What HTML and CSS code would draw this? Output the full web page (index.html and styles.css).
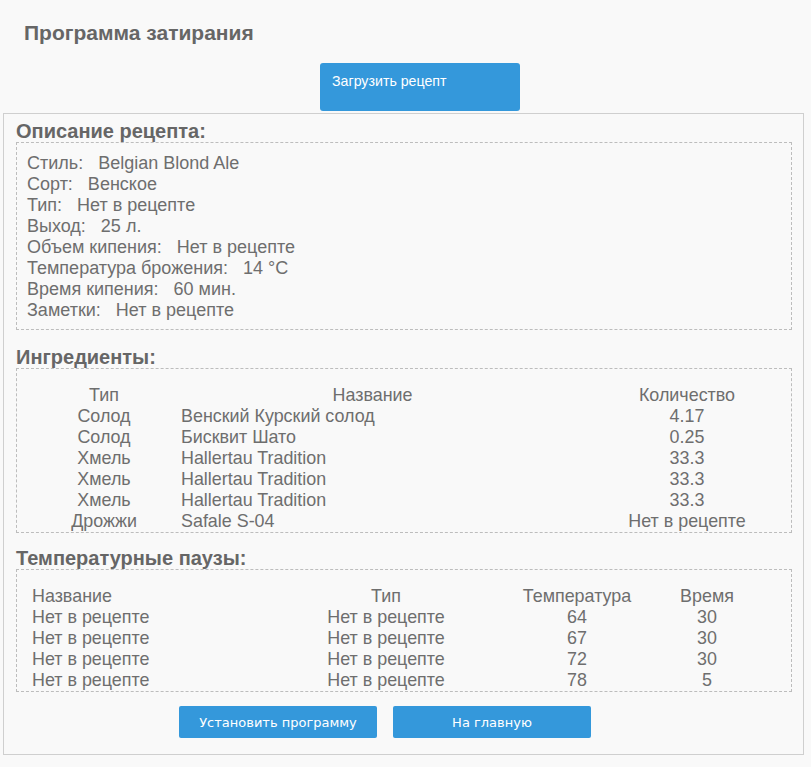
FILE: index.html
```html
<!DOCTYPE html>
<html lang="ru">
<head>
<meta charset="UTF-8">
<title>Программа затирания</title>
<link rel="stylesheet" href="styles.css">
</head>
<body>
<div class="page">
  <h1 class="title">Программа затирания</h1>

  <div class="load-row">
    <button class="btn-load">Загрузить рецепт</button>
  </div>

  <div class="panel">
    <h2 class="sec-title">Описание рецепта:</h2>
    <div class="box desc">
      <div>Стиль:&nbsp;&nbsp; Belgian Blond Ale</div>
      <div>Сорт:&nbsp;&nbsp; Венское</div>
      <div>Тип:&nbsp;&nbsp; Нет в рецепте</div>
      <div>Выход:&nbsp;&nbsp; 25 л.</div>
      <div>Объем кипения:&nbsp;&nbsp; Нет в рецепте</div>
      <div>Температура брожения:&nbsp;&nbsp; 14 °C</div>
      <div>Время кипения:&nbsp;&nbsp; 60 мин.</div>
      <div>Заметки:&nbsp;&nbsp; Нет в рецепте</div>
    </div>

    <h2 class="sec-title">Ингредиенты:</h2>
    <div class="box box-table ingr">
      <table class="grid">
        <colgroup>
          <col class="c-type">
          <col class="c-name">
          <col class="c-qty">
        </colgroup>
        <tr class="head"><td class="center">Тип</td><td class="name-head">Название</td><td class="center">Количество</td></tr>
        <tr><td class="center">Солод</td><td>Венский Курский солод</td><td class="center">4.17</td></tr>
        <tr><td class="center">Солод</td><td>Бисквит Шато</td><td class="center">0.25</td></tr>
        <tr><td class="center">Хмель</td><td>Hallertau Tradition</td><td class="center">33.3</td></tr>
        <tr><td class="center">Хмель</td><td>Hallertau Tradition</td><td class="center">33.3</td></tr>
        <tr><td class="center">Хмель</td><td>Hallertau Tradition</td><td class="center">33.3</td></tr>
        <tr><td class="center">Дрожжи</td><td>Safale S-04</td><td class="center">Нет в рецепте</td></tr>
      </table>
    </div>

    <h2 class="sec-title tight">Температурные паузы:</h2>
    <div class="box box-table pauses">
      <table class="grid">
        <colgroup>
          <col class="c-pname">
          <col class="c-ptype">
          <col class="c-temp">
          <col class="c-time">
        </colgroup>
        <tr><td>Название</td><td class="center">Тип</td><td class="center">Температура</td><td class="center">Время</td></tr>
        <tr><td>Нет в рецепте</td><td class="center">Нет в рецепте</td><td class="center">64</td><td class="center">30</td></tr>
        <tr><td>Нет в рецепте</td><td class="center">Нет в рецепте</td><td class="center">67</td><td class="center">30</td></tr>
        <tr><td>Нет в рецепте</td><td class="center">Нет в рецепте</td><td class="center">72</td><td class="center">30</td></tr>
        <tr><td>Нет в рецепте</td><td class="center">Нет в рецепте</td><td class="center">78</td><td class="center">5</td></tr>
      </table>
    </div>

    <div class="actions">
      <button class="btn">Установить программу</button>
      <button class="btn">На главную</button>
    </div>
  </div>
</div>
</body>
</html>
```

FILE: styles.css
```css
:root {
  --bg: #f9f9f9;
  --ink: #6e6e6e;
  --ink-head: #666;
  --line: #cfcfcf;
  --dash: #bdbdbd;
  --blue: #3498db;
}
* { box-sizing: border-box; }
html, body {
  margin: 0;
  padding: 0;
  background: var(--bg);
  color: var(--ink);
  font-family: "Liberation Sans", Arial, sans-serif;
}
.page {
  width: 811px;
}
.title {
  margin: 0;
  padding: 21px 0 0 24px;
  font-size: 21px;
  line-height: 23px;
  font-weight: bold;
  color: var(--ink-head);
}
.load-row {
  display: flex;
  padding-left: 320px;
  margin-top: 19px;
}
.btn-load {
  width: 200px;
  height: 48px;
  border: none;
  border-radius: 3px;
  background: var(--blue);
  color: #fff;
  font-family: "Liberation Sans", Arial, sans-serif;
  font-size: 14.2px;
  text-align: left;
  padding: 10px 12px 0;
  display: flex;
  align-items: flex-start;
}
.panel {
  margin: 2px 0 0 3px;
  width: 801px;
  border: 1px solid var(--line);
  padding: 6px 11px 16px 12px;
}
.sec-title {
  margin: 16px 0 0 0;
  font-size: 20px;
  line-height: 22px;
  font-weight: bold;
  color: var(--ink-head);
}
.sec-title:first-child { margin-top: 0; }
.sec-title.tight { margin-top: 14px; }
.box {
  border: 1px dashed var(--dash);
  width: 776px;
}
.desc {
  padding: 10px 10px 8px 10px;
  font-size: 18px;
  line-height: 21px;
}
.box-table { padding: 16px 0 0 11px; }
.grid {
  border-collapse: collapse;
  table-layout: fixed;
  font-size: 17.9px;
}
.grid td {
  padding: 0;
  height: 21px;
  line-height: 21px;
  white-space: nowrap;
}
.grid .center { text-align: center; }
.c-type { width: 152px; }
.c-name { width: 404px; }
.c-qty { width: 206px; }
.grid td.name-head {
  text-align: center;
  padding-right: 20px;
}
.ingr .grid td:nth-child(2) { padding-left: 1px; }
.pauses .grid td:first-child { padding-left: 4px; }
.c-pname { width: 240px; }
.c-ptype { width: 236px; }
.c-temp { width: 146px; }
.c-time { width: 114px; }
.actions {
  display: flex;
  gap: 16px;
  margin-top: 14px;
  padding-left: 163px;
}
.btn {
  width: 198px;
  height: 32px;
  border: none;
  border-radius: 2px;
  background: var(--blue);
  color: #fff;
  font-family: "DejaVu Sans", Verdana, sans-serif;
  font-size: 13px;
  cursor: pointer;
}
```
